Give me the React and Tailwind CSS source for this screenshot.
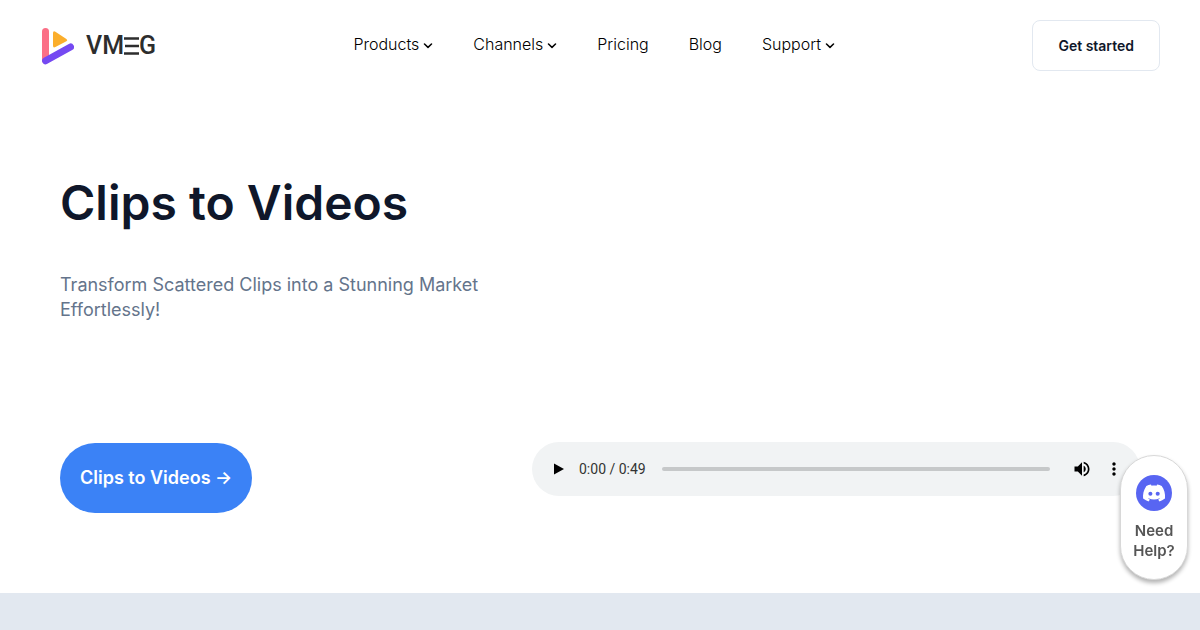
import { useState } from "react";

const navItems = [
  { label: "Products", menu: true },
  { label: "Channels", menu: true },
  { label: "Pricing", menu: false },
  { label: "Blog", menu: false },
  { label: "Support", menu: true },
];

function Logo() {
  return (
    <a href="#" aria-label="VMEG home" className="flex items-center gap-3 text-[#2d2d2d]">
      <svg viewBox="0 0 34 38" className="h-[38px] w-[34px]" aria-hidden="true">
        <path d="M5.5 4.5V33" stroke="#fb6f86" strokeWidth="7" strokeLinecap="round" />
        <path d="M13 6.2V18.6Q13 21.4 15.4 20.1L26.4 14.2Q28.2 13 26.4 11.9L15.4 4.8Q13 3.4 13 6.2Z" fill="#fbae2c" />
        <path d="M5.6 33.8L30.5 20" stroke="#7549f2" strokeWidth="7" strokeLinecap="round" />
      </svg>
      <span className="flex items-center font-['Roboto',sans-serif] text-[25px] leading-8 font-medium">
        <span>VM</span>
        <svg viewBox="0 0 15 18" className="h-[18px] w-[15px]" aria-hidden="true">
          <path d="M0 1.5H15M1 9H15M0 16.5H15" stroke="currentColor" strokeWidth="2.6" />
        </svg>
        <span>G</span>
      </span>
    </a>
  );
}

function Chevron() {
  return (
    <svg viewBox="0 0 10 6" className="mt-1 h-[6px] w-[10px]" fill="none" aria-hidden="true">
      <path d="M1.5 1L5 4.4L8.5 1" stroke="currentColor" strokeWidth="1.5" strokeLinecap="round" strokeLinejoin="round" />
    </svg>
  );
}

function AudioPlayer() {
  const [position, setPosition] = useState(0);
  return (
    <div className="flex h-[54px] w-full items-center rounded-full bg-[#f1f3f4] pr-[10px] pl-4">
      <button type="button" aria-label="Play" className="grid size-5 place-items-center">
        <svg viewBox="0 0 10 12" className="ml-[2px] h-3 w-[10px]" aria-hidden="true">
          <path d="M0 0.5V11.5L10 6Z" />
        </svg>
      </button>
      <span className="ml-[11px] font-['Roboto',sans-serif] text-sm whitespace-nowrap text-[#333]">0:00 / 0:49</span>
      <input
        type="range"
        aria-label="Audio position"
        min="0"
        max="49"
        value={position}
        onChange={(e) => setPosition(Number(e.target.value))}
        className="mx-4 h-1 min-w-0 flex-1 appearance-none rounded-full bg-[#c6c8c9] [&::-webkit-slider-thumb]:size-0 [&::-webkit-slider-thumb]:appearance-none"
      />
      <button type="button" aria-label="Mute" className="grid size-8 place-items-center">
        <svg viewBox="0 0 24 24" className="size-5" aria-hidden="true">
          <path d="M3 9v6h4l5 5V4L7 9H3zm13.5 3c0-1.77-1.02-3.29-2.5-4.03v8.05c1.48-.73 2.5-2.25 2.5-4.02zM14 3.23v2.06c2.89.86 5 3.54 5 6.71s-2.11 5.85-5 6.71v2.06c4.01-.91 7-4.49 7-8.77s-2.99-7.86-7-8.77z" />
        </svg>
      </button>
      <button type="button" aria-label="More options" className="grid size-8 place-items-center">
        <svg viewBox="0 0 24 24" className="size-5" aria-hidden="true">
          <path d="M12 8c1.1 0 2-.9 2-2s-.9-2-2-2-2 .9-2 2 .9 2 2 2zm0 2c-1.1 0-2 .9-2 2s.9 2 2 2 2-.9 2-2-.9-2-2-2zm0 6c-1.1 0-2 .9-2 2s.9 2 2 2 2-.9 2-2-.9-2-2-2z" />
        </svg>
      </button>
    </div>
  );
}

function HelpWidget() {
  return (
    <a
      href="#help"
      className="fixed right-3 bottom-[50px] flex w-[68px] flex-col items-center gap-[10px] rounded-full border border-[#d8d8d8] bg-white pt-[19px] pb-[18px] text-center text-[15px] leading-5 font-semibold text-[#555] shadow-[0_3px_4px_rgba(0,0,0,0.3)]"
    >
      <svg viewBox="0 0 36 36" className="size-9" aria-hidden="true">
        <circle cx="18" cy="18" r="18" fill="#5865f2" />
        <g transform="translate(7 9.6) scale(0.92)">
          <path
            fill="#fff"
            d="M20.317 1.4921a19.7913 19.7913 0 00-4.8851-1.5152.0741.0741 0 00-.0785.0371c-.211.3753-.4447.8648-.6083 1.2495-1.8447-.2762-3.68-.2762-5.4868 0-.1636-.3933-.4058-.8742-.6177-1.2495a.077.077 0 00-.0785-.037 19.7363 19.7363 0 00-4.8852 1.515.0699.0699 0 00-.0321.0277C.5334 6.1805-.319 10.7012.0992 15.1661a.0824.0824 0 00.0312.0561c2.0528 1.5076 4.0413 2.4228 5.9929 3.0294a.0777.0777 0 00.0842-.0276c.4616-.6304.8731-1.2952 1.226-1.9942a.076.076 0 00-.0416-.1057c-.6528-.2476-1.2743-.5495-1.8722-.8923a.077.077 0 01-.0076-.1277c.1258-.0943.2517-.1923.3718-.2914a.0743.0743 0 01.0776-.0105c3.9278 1.7933 8.18 1.7933 12.0614 0a.0739.0739 0 01.0785.0095c.1202.099.246.1981.3728.2924a.077.077 0 01-.0066.1276 12.2986 12.2986 0 01-1.873.8914.0766.0766 0 00-.0407.1067c.3604.698.7719 1.3628 1.225 1.9932a.076.076 0 00.0842.0286c1.961-.6067 3.9495-1.5219 6.0023-3.0294a.077.077 0 00.0313-.0552c.5004-5.177-.8382-9.6739-3.5485-13.6604a.061.061 0 00-.0312-.0286z"
          />
          <circle cx="8.02" cy="9.9" r="2.2" fill="#5865f2" />
          <circle cx="15.99" cy="9.9" r="2.2" fill="#5865f2" />
        </g>
      </svg>
      <span>
        Need
        <br />
        Help?
      </span>
    </a>
  );
}

export default function App() {
  return (
    <div className="font-['Inter',sans-serif] text-[#0f172a]">
      <header className="flex items-center justify-between px-10 pt-5">
        <Logo />
        <nav className="flex items-center gap-10 pb-[3px] text-base font-light text-black">
          {navItems.map((item) => (
            <a key={item.label} href={"#" + item.label.toLowerCase()} className="flex items-center gap-1">
              {item.label}
              {item.menu && <Chevron />}
            </a>
          ))}
        </nav>
        <a href="#start" className="flex h-[51px] items-center rounded-lg border border-[#e2e8f0] px-[25px] text-sm font-semibold">
          Get started
        </a>
      </header>

      <main>
        <section className="grid grid-cols-[432px_1fr] items-end gap-10 px-[60px] pt-[102px] pb-20">
          <div>
            <h1 className="text-5xl leading-[60px] font-semibold">Clips to Videos</h1>
            <p className="mt-[39px] text-lg leading-[25px] text-[#64748b]">
              Transform Scattered Clips into a Stunning Market Effortlessly!
            </p>
            <a
              href="#create"
              className="mt-[121px] flex h-[70px] w-fit items-center rounded-full bg-[#3b82f6] px-5 text-lg font-semibold text-white"
            >
              Clips to Videos →
            </a>
          </div>
          <div className="pb-[17px]">
            <AudioPlayer />
          </div>
        </section>
        <section className="h-10 bg-[#e2e8f0]" />
      </main>

      <HelpWidget />
    </div>
  );
}
